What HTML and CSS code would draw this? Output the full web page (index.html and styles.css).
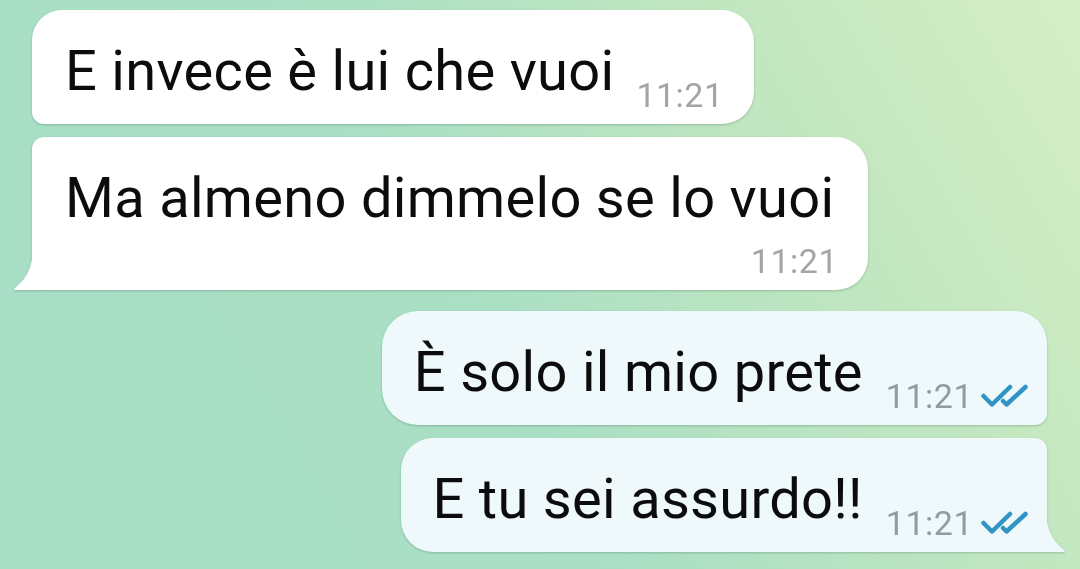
FILE: index.html
```html
<!DOCTYPE html>
<html lang="it">

<head>
  <meta charset="utf-8">
  <meta name="viewport" content="width=device-width, initial-scale=1.0">
  <title>Chat</title>
  <link rel="stylesheet" href="styles.css">
</head>

<body>
  <div class="chat">

    <div class="group group-in">
      <div class="bubble bubble-in first">
        <span class="text">E invece è lui che vuoi</span>
        <span class="meta"><span class="time">11:21</span></span>
      </div>
      <div class="bubble bubble-in last">
        <span class="text">Ma almeno dimmelo se lo vuoi</span>
        <span class="meta"><span class="time">11:21</span></span>
        <svg class="tail tail-left" width="20" height="40" viewBox="0 0 20 40">
          <path d="M20 0 L20 40 L3 40 Q0 40 1.5 38.2 C12 30 19 20 20 0 Z" fill="#ffffff"/>
        </svg>
      </div>
    </div>

    <div class="group group-out">
      <div class="bubble bubble-out first">
        <span class="text">È solo il mio prete</span>
        <span class="meta">
          <span class="time">11:21</span>
          <svg class="ticks" width="47" height="24" viewBox="0 0 47 24">
            <path d="M2.5 12 L11 20.5 L29 3" />
            <path d="M22 17 L25.5 20.5 L44.5 3" />
          </svg>
        </span>
      </div>
      <div class="bubble bubble-out last">
        <span class="text">E tu sei assurdo!!</span>
        <span class="meta">
          <span class="time">11:21</span>
          <svg class="ticks" width="47" height="24" viewBox="0 0 47 24">
            <path d="M2.5 12 L11 20.5 L29 3" />
            <path d="M22 17 L25.5 20.5 L44.5 3" />
          </svg>
        </span>
        <svg class="tail tail-right" width="20" height="40" viewBox="0 0 20 40">
          <path d="M0 0 L0 40 L17 40 Q20 40 18.5 38.2 C8 30 1 20 0 0 Z" fill="#eff9fc"/>
        </svg>
      </div>
    </div>

  </div>
</body>

</html>
```

FILE: styles.css
```css
* {
  box-sizing: border-box;
}

html,
body {
  margin: 0;
  height: 100%;
}

body {
  overflow: hidden;
  font-family: Roboto, "Noto Sans", Arial, sans-serif;
  background: linear-gradient(60deg, #a7dec6 0%, #aadfc4 45%, #c2e7c0 75%, #d6eec4 100%);
}

.chat {
  display: flex;
  flex-direction: column;
  gap: 21px;
  padding: 10px 33px 0 32px;
}

.group {
  display: flex;
  flex-direction: column;
  gap: 13px;
}

.group-in {
  align-items: flex-start;
}

.group-out {
  align-items: flex-end;
}

.bubble {
  position: relative;
  display: flex;
  flex-wrap: wrap;
  align-items: flex-end;
  justify-content: flex-end;
  column-gap: 22px;
  row-gap: 7px;
  max-width: 836px;
  padding: 28px 30px 13px 33px;
  border-radius: 32px;
  filter: drop-shadow(0 1px 1px rgba(40, 80, 60, 0.28));
}

.bubble .text {
  flex: 0 1 auto;
  margin-right: auto;
  margin-bottom: 7px;
  font-size: 56px;
  line-height: 66px;
  letter-spacing: 0.3px;
  color: #0c0c0c;
}

.meta {
  display: flex;
  flex: none;
  align-items: center;
  margin-left: auto;
}

.time {
  font-size: 34px;
  line-height: 32px;
  letter-spacing: 0.5px;
}

.bubble-in {
  background: #ffffff;
}

.bubble-in .time {
  color: #a2a5a8;
}

.bubble-in.first {
  border-radius: 30px 32px 32px 12px;
}

.bubble-in.last {
  border-radius: 12px 32px 32px 0;
}

.bubble-out {
  background: #eff9fc;
  padding-right: 19px;
  padding-left: 32px;
  column-gap: 23px;
}

.bubble-out .time {
  color: #8e9ca5;
}

.bubble-out.first {
  border-radius: 36px 32px 12px 36px;
}

.bubble-out.last {
  border-radius: 32px 12px 0 32px;
}

.ticks {
  flex: none;
  margin-left: 8px;
  fill: none;
  stroke: #3294c5;
  stroke-width: 4.5;
  stroke-linecap: round;
  stroke-linejoin: round;
}

.tail {
  position: absolute;
  bottom: 0;
}

.tail-left {
  left: -19px;
}

.tail-right {
  right: -19px;
}
```
